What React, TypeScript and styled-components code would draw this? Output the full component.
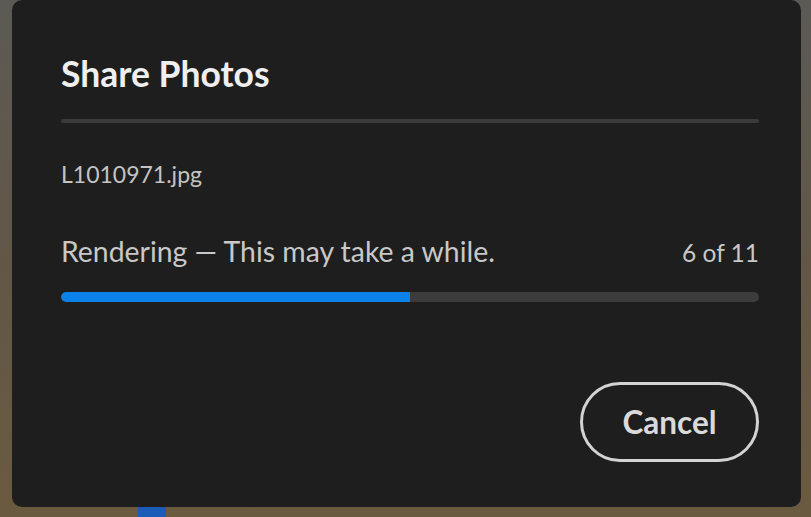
import React from 'react';
import styled, { createGlobalStyle } from 'styled-components';

const GlobalStyle = createGlobalStyle`
  html, body {
    margin: 0;
    padding: 0;
    width: 811px;
    height: 517px;
    overflow: hidden;
  }
  body {
    font-family: Lato, 'Open Sans', sans-serif;
    background: #5a5345;
  }
`;

const Backdrop = styled.div`
  width: 811px;
  height: 517px;
  padding: 0 10px 10px 12px;
  box-sizing: border-box;
  background:
    linear-gradient(90deg, transparent 138px, #1a5cb8 138px, #1a5cb8 166px, transparent 166px) bottom / 100% 12px no-repeat,
    linear-gradient(180deg, #5c5a55 0%, #625747 50%, #6a5a3f 100%);
`;

const Dialog = styled.div`
  height: 100%;
  background: #1e1e1e;
  border-radius: 10px;
  padding: 52px 42px 0 49px;
  box-sizing: border-box;
  display: flex;
  flex-direction: column;
  color: #c9c9c9;
`;

const Title = styled.h1`
  margin: 0;
  font-size: 35.5px;
  font-weight: 700;
  color: #efefef;
  line-height: 44px;
`;

const Divider = styled.div`
  margin-top: 23px;
  height: 4px;
  border-radius: 2px;
  background: #3b3b3b;
`;

const FileName = styled.div`
  margin-top: 36px;
  font-size: 23px;
  line-height: 30px;
  color: #c4c4c4;
`;

const StatusRow = styled.div`
  margin-top: 46px;
  display: flex;
  justify-content: space-between;
  align-items: baseline;
  line-height: 32px;
  color: #c8c8c8;
`;

const StatusText = styled.span<{ $size: number }>`
  font-size: ${(p) => p.$size}px;
`;

const Track = styled.div`
  margin-top: 23px;
  height: 10px;
  border-radius: 5px;
  background: #3c3c3c;
  overflow: hidden;
`;

const Fill = styled.div`
  height: 100%;
  background: #0a82ea;
  border-radius: 5px 0 0 5px;
`;

const Footer = styled.div`
  margin-top: 80px;
  display: flex;
  justify-content: flex-end;
`;

const CancelButton = styled.button`
  width: 179px;
  height: 80px;
  border: 3px solid #d3d3d3;
  border-radius: 40px;
  background: transparent;
  color: #dadada;
  font-family: Lato, 'Open Sans', sans-serif;
  font-size: 31.5px;
  font-weight: 700;
  cursor: pointer;
`;

export default function App() {
  const done = 6;
  const total = 11;
  const pct = (done / (total + 1)) * 100;
  return (
    <>
      <GlobalStyle />
      <Backdrop>
        <Dialog>
          <Title>Share Photos</Title>
          <Divider />
          <FileName>L1010971.jpg</FileName>
          <StatusRow>
            <StatusText $size={28.4}>Rendering — This may take a while.</StatusText>
            <StatusText $size={24.5}>
              {done} of {total}
            </StatusText>
          </StatusRow>
          <Track>
            <Fill style={{ width: `${pct}%` }} />
          </Track>
          <Footer>
            <CancelButton>Cancel</CancelButton>
          </Footer>
        </Dialog>
      </Backdrop>
    </>
  );
}
